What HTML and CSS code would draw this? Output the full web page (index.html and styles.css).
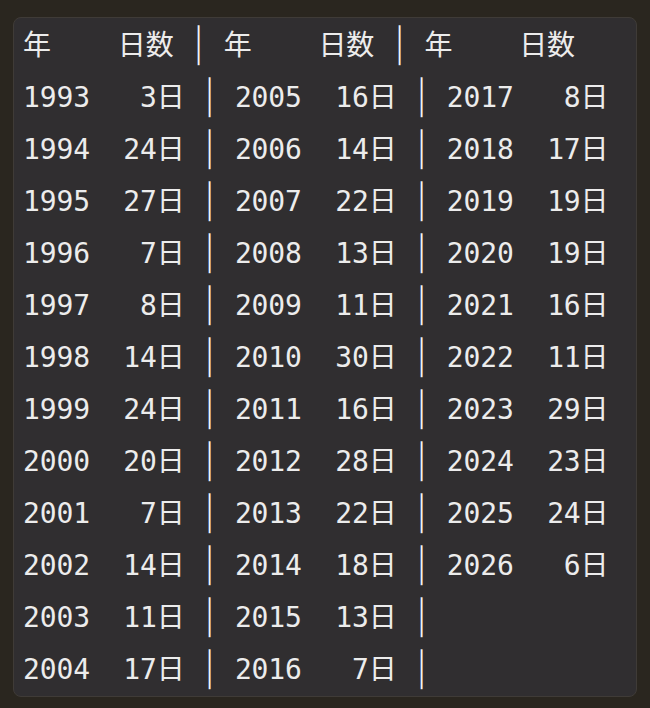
FILE: index.html
```html
<!DOCTYPE html>
<html lang="ja">
<head>
<meta charset="utf-8">
<link rel="stylesheet" href="styles.css">
</head>
<body>
<div class="panel"><pre class="code"><span class="head">年    日数 <span class="sep">│</span> 年    日数 <span class="sep">│</span> 年    日数</span>
1993   3日 <span class="sep">│</span> 2005  16日 <span class="sep">│</span> 2017   8日
1994  24日 <span class="sep">│</span> 2006  14日 <span class="sep">│</span> 2018  17日
1995  27日 <span class="sep">│</span> 2007  22日 <span class="sep">│</span> 2019  19日
1996   7日 <span class="sep">│</span> 2008  13日 <span class="sep">│</span> 2020  19日
1997   8日 <span class="sep">│</span> 2009  11日 <span class="sep">│</span> 2021  16日
1998  14日 <span class="sep">│</span> 2010  30日 <span class="sep">│</span> 2022  11日
1999  24日 <span class="sep">│</span> 2011  16日 <span class="sep">│</span> 2023  29日
2000  20日 <span class="sep">│</span> 2012  28日 <span class="sep">│</span> 2024  23日
2001   7日 <span class="sep">│</span> 2013  22日 <span class="sep">│</span> 2025  24日
2002  14日 <span class="sep">│</span> 2014  18日 <span class="sep">│</span> 2026   6日
2003  11日 <span class="sep">│</span> 2015  13日 <span class="sep">│</span>
2004  17日 <span class="sep">│</span> 2016   7日 <span class="sep">│</span></pre></div>
</body>
</html>
```
FILE: styles.css
```css
html, body {
  margin: 0;
  padding: 0;
  background: #2a261f;
}
body {
  padding: 17px 13px 11px 13px;
}
.panel {
  background: #302e30;
  border: 1px solid #3f3b37;
  border-radius: 8px;
  height: 680px;
  box-sizing: border-box;
  padding: 2px 0 0 9px;
}
.code {
  margin: 0;
  font-family: "DejaVu Sans Mono", "Noto Sans CJK JP", monospace;
  font-size: 28px;
  line-height: 52px;
  letter-spacing: -0.13px;
  color: #ececec;
  white-space: pre;
}
.sep {
  display: inline-block;
  transform: scale(0.8, 1.2);
  color: #f4f4f4;
}
```
